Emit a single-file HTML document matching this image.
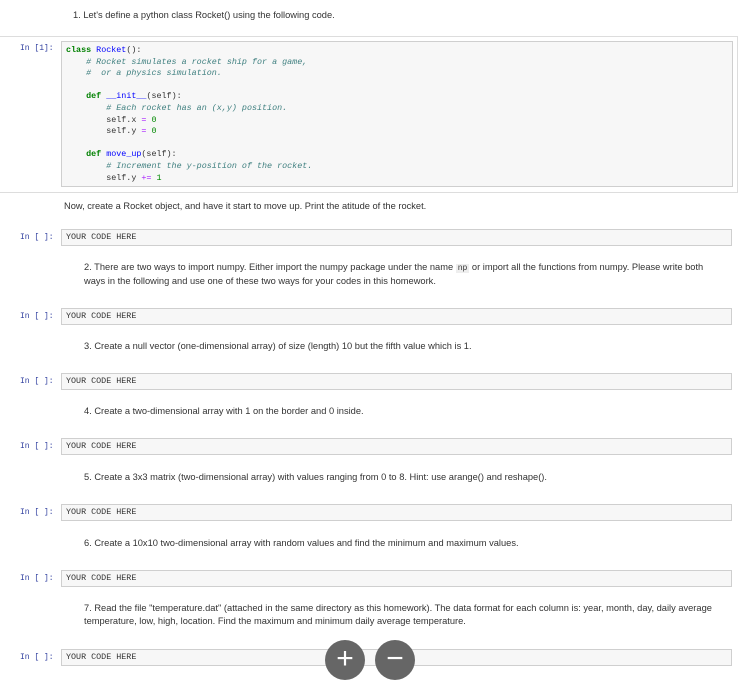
<!DOCTYPE html>
<html><head><style>
body{margin:0;width:745px;height:675px;overflow:hidden;background:#fff;position:relative;font-family:"Liberation Sans",sans-serif;}
.t{position:absolute;left:73px;font-size:9.3px;color:#333;line-height:13px;white-space:nowrap;}
.p{position:absolute;left:20px;font-family:"Liberation Mono",monospace;font-size:8px;color:#303f9f;}
.c{position:absolute;left:61px;width:671px;height:17px;background:#f7f7f7;border:1px solid #cfcfcf;box-sizing:border-box;font-family:"Liberation Mono",monospace;font-size:8.4px;color:#333;padding-left:4px;line-height:15px;}
pre{margin:0;font-family:"Liberation Mono",monospace;font-size:8.4px;line-height:11.6px;color:#333;}
.k{color:#008000;font-weight:bold}.n{color:#0000ff}.cm{color:#408080;font-style:italic}.o{color:#aa22ff}.m{color:#080}
.btn{position:absolute;top:640px;width:40px;height:40px;border-radius:50%;background:#666;color:#fff;font-size:30px;text-align:center;line-height:38px;}
</style></head><body>
<div class="t" style="top:9px">1. Let's define a python class Rocket() using the following code.</div>
<div style="position:absolute;left:0;top:36px;width:737px;height:155px;border-top:1px solid #ddd;border-bottom:1px solid #ddd;border-right:1px solid #ddd;"></div>
<div class="p" style="top:44px">In [1]:</div>
<div style="position:absolute;left:61px;top:41px;width:672px;height:146px;background:#f7f7f7;border:1px solid #cfcfcf;box-sizing:border-box;padding:3px 4px;">
<pre><span class="k">class</span> <span class="n">Rocket</span>():
    <span class="cm"># Rocket simulates a rocket ship for a game,</span>
    <span class="cm">#  or a physics simulation.</span>

    <span class="k">def</span> <span class="n">__init__</span>(self):
        <span class="cm"># Each rocket has an (x,y) position.</span>
        self.x <span class="o">=</span> <span class="m">0</span>
        self.y <span class="o">=</span> <span class="m">0</span>

    <span class="k">def</span> <span class="n">move_up</span>(self):
        <span class="cm"># Increment the y-position of the rocket.</span>
        self.y <span class="o">+=</span> <span class="m">1</span></pre></div>
<div class="t" style="top:200px;left:64px">Now, create a Rocket object, and have it start to move up. Print the atitude of the rocket.</div>
<div class="p" style="top:233px">In [ ]:</div><div class="c" style="top:229px">YOUR CODE HERE</div>
<div class="t" style="top:261px;left:84px">2. There are two ways to import numpy. Either import the numpy package under the name <span style="font-family:'Liberation Mono',monospace;background:#eee;padding:0 2px;font-size:8px">np</span> or import all the functions from numpy. Please write both<br>ways in the following and use one of these two ways for your codes in this homework.</div>
<div class="p" style="top:312px">In [ ]:</div><div class="c" style="top:308px">YOUR CODE HERE</div>
<div class="t" style="top:340px;left:84px">3. Create a null vector (one-dimensional array) of size (length) 10 but the fifth value which is 1.</div>
<div class="p" style="top:377px">In [ ]:</div><div class="c" style="top:373px">YOUR CODE HERE</div>
<div class="t" style="top:405px;left:84px">4. Create a two-dimensional array with 1 on the border and 0 inside.</div>
<div class="p" style="top:442px">In [ ]:</div><div class="c" style="top:438px">YOUR CODE HERE</div>
<div class="t" style="top:471px;left:84px">5. Create a 3x3 matrix (two-dimensional array) with values ranging from 0 to 8. Hint: use arange() and reshape().</div>
<div class="p" style="top:508px">In [ ]:</div><div class="c" style="top:504px">YOUR CODE HERE</div>
<div class="t" style="top:537px;left:84px">6. Create a 10x10 two-dimensional array with random values and find the minimum and maximum values.</div>
<div class="p" style="top:574px">In [ ]:</div><div class="c" style="top:570px">YOUR CODE HERE</div>
<div class="t" style="top:602px;left:84px">7. Read the file "temperature.dat" (attached in the same directory as this homework). The data format for each column is: year, month, day, daily average<br>temperature, low, high, location. Find the maximum and minimum daily average temperature.</div>
<div class="p" style="top:653px">In [ ]:</div><div class="c" style="top:649px">YOUR CODE HERE</div>
<div class="btn" style="left:325px">+</div>
<div class="btn" style="left:375px">&minus;</div>
</body></html>
